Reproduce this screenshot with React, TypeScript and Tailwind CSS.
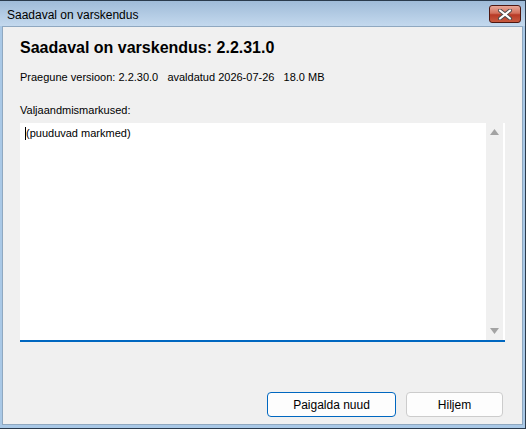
import React from 'react';

const font = { fontFamily: '"Liberation Sans", Arial, sans-serif' };

const CloseButton = () => (
  <div className="mt-[4px] mr-[4px] w-[32px] h-[18px] rounded-[3px] border border-[#4e1710] bg-[linear-gradient(#e8a898,#d2705c_45%,#b83a26_55%,#c75a40)] flex items-center justify-center">
    <svg width="16" height="11" viewBox="0 0 16 11">
      <path d="M3 1.5 L13 9.5 M13 1.5 L3 9.5" stroke="#4a4a4a" strokeWidth="4" strokeLinecap="round" />
      <path d="M3 1.5 L13 9.5 M13 1.5 L3 9.5" stroke="#ffffff" strokeWidth="2.2" strokeLinecap="round" />
    </svg>
  </div>
);

const App = () => {
  return (
    <div style={font} className="w-[526px] h-[429px] flex flex-col bg-[#a9c8e6] border-t border-r border-b border-[#2a3a4c] overflow-hidden">
      {/* title bar */}
      <div className="h-[25px] shrink-0 flex items-start justify-between bg-[linear-gradient(#9fbbd8,#c4d9ee)]">
        <span className="pl-[7px] pt-[7px] text-[12px] leading-[14px] text-black">Saadaval on varskendus</span>
        <CloseButton />
      </div>

      {/* client area */}
      <div className="flex-1 flex flex-col ml-[2px] mr-[2px] mb-[3px] border border-[#8fa8c0] bg-[#f0f0f0] px-[17px]">
        <h1 className="mt-[12px] text-[16px] leading-[18px] font-bold text-black">Saadaval on varskendus: 2.2.31.0</h1>
        <p className="mt-[14px] text-[11px] leading-[13px] text-black whitespace-pre">
          {'Praegune versioon: 2.2.30.0   avaldatud 2026-07-26   18.0 MB'}
        </p>
        <p className="mt-[20px] text-[11px] leading-[13px] text-black">Valjaandmismarkused:</p>

        <div className="mt-[6px] h-[219px] flex bg-white border-b-2 border-[#0067c0]">
          <div className="flex-1 pl-[5px] pt-[4px] text-[11px] leading-[13px] text-black flex items-start">
            <span className="w-px h-[13px] bg-black" />
            <span>(puuduvad markmed)</span>
          </div>
          <div className="w-[17px] mr-[2px] bg-[#f0f0f0] flex flex-col justify-between items-center py-[6px]">
            <svg width="9" height="6" viewBox="0 0 9 6"><path d="M0 6 L4.5 0 L9 6 Z" fill="#a3a3a3" /></svg>
            <svg width="9" height="6" viewBox="0 0 9 6"><path d="M0 0 L4.5 6 L9 0 Z" fill="#a3a3a3" /></svg>
          </div>
        </div>

        <div className="flex-1" />
        <div className="flex justify-end gap-[10px] mb-[7px] mr-[2px]">
          <button className="w-[129px] h-[25px] rounded-[4px] border border-[#0067c0] bg-[#fdfdfd] text-[12px] text-black">
            Paigalda nuud
          </button>
          <button className="w-[97px] h-[25px] rounded-[4px] border border-[#cccccc] bg-[#fdfdfd] text-[12px] text-black">
            Hiljem
          </button>
        </div>
      </div>
    </div>
  );
};

export default App;
